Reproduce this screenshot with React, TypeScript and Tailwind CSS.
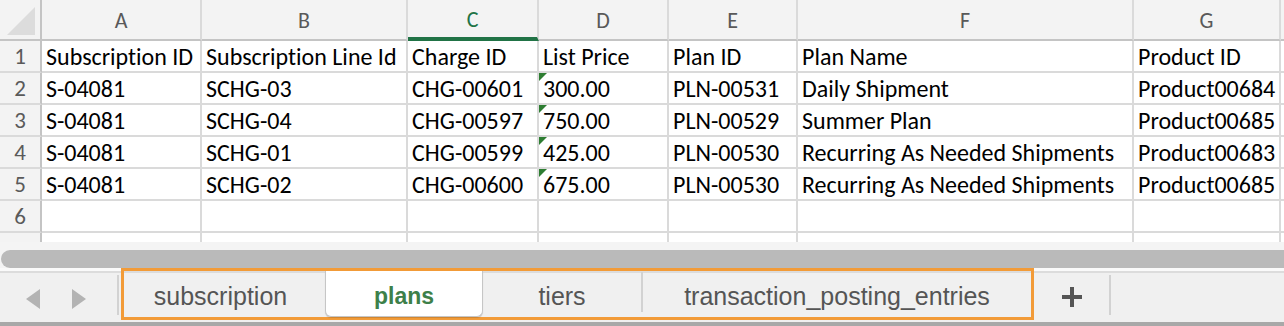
import React from "react"

const columns = [
  { letter: "A", width: "w-[160px]" },
  { letter: "B", width: "w-[206px]" },
  { letter: "C", width: "w-[131px]" },
  { letter: "D", width: "w-[130px]" },
  { letter: "E", width: "w-[129px]" },
  { letter: "F", width: "w-[336px]" },
  { letter: "G", width: "w-[147px]" },
]

const rows: string[][] = [
  ["Subscription ID", "Subscription Line Id", "Charge ID", "List Price", "Plan ID", "Plan Name", "Product ID"],
  ["S-04081", "SCHG-03", "CHG-00601", "300.00", "PLN-00531", "Daily Shipment", "Product00684"],
  ["S-04081", "SCHG-04", "CHG-00597", "750.00", "PLN-00529", "Summer Plan", "Product00685"],
  ["S-04081", "SCHG-01", "CHG-00599", "425.00", "PLN-00530", "Recurring As Needed Shipments", "Product00683"],
  ["S-04081", "SCHG-02", "CHG-00600", "675.00", "PLN-00530", "Recurring As Needed Shipments", "Product00685"],
  ["", "", "", "", "", "", ""],
]

const cellFont = "[font-family:Carlito,Calibri,Lato,sans-serif] [font-variant-ligatures:none]"
const tabFont = "[font-family:'Liberation_Sans',Arial,sans-serif]"

function HeaderRow() {
  return (
    <div className="flex h-[41px] bg-[#f3f3f3]">
      <div className="w-[42px] shrink-0 border-r-2 border-b-2 border-[#c4c4c4] relative">
        <svg width="42" height="39" className="absolute left-0 top-0">
          <polygon points="7,35 35,35 35,7" fill="#dcdcdc" />
        </svg>
      </div>
      {columns.map((col) => (
        <div
          key={col.letter}
          className={`${col.width} shrink-0 flex items-center justify-center pt-[1px] border-r-2 border-[#dadada] text-[22px] ${cellFont} ${
            col.letter === "C"
              ? "border-b-4 border-b-[#217346] text-[#217346]"
              : "border-b-2 border-b-[#c4c4c4] text-[#595959]"
          }`}
        >
          {col.letter}
        </div>
      ))}
      <div className="flex-1 border-b-2 border-[#c4c4c4]" />
    </div>
  )
}

function DataRow({ index, cells }: { index: number; cells: string[] }) {
  return (
    <div className={`flex h-[32px] ${cellFont}`}>
      <div className="w-[42px] shrink-0 flex items-center justify-center pt-[1px] bg-[#f3f3f3] border-r-2 border-b-2 border-r-[#c4c4c4] border-b-[#dadada] text-[23px] text-[#5a5a5a]">
        {index}
      </div>
      {cells.map((text, i) => (
        <div
          key={i}
          className={`${columns[i].width} shrink-0 relative flex items-center pl-[4px] pt-[1px] bg-white border-r-2 border-b-2 border-[#dadada] text-[24px] text-black whitespace-nowrap overflow-hidden`}
        >
          {i === 3 && index > 1 && index < 6 && (
            <svg width="8" height="8" className="absolute left-0 top-0">
              <polygon points="0,0 8,0 0,8" fill="#2e7d32" />
            </svg>
          )}
          {text}
        </div>
      ))}
      <div className="flex-1 bg-white border-b-2 border-[#dadada]" />
    </div>
  )
}

function PartialRow() {
  return (
    <div className="flex h-[9px]">
      <div className="w-[42px] shrink-0 bg-[#f3f3f3] border-r-2 border-[#c4c4c4]" />
      {columns.map((col) => (
        <div key={col.letter} className={`${col.width} shrink-0 bg-white border-r-2 border-[#dadada]`} />
      ))}
      <div className="flex-1 bg-white" />
    </div>
  )
}

function SheetTabs() {
  return (
    <div className="flex h-[58px] items-start bg-[linear-gradient(to_bottom,#fafafa_0,#fafafa_3px,#dcdcdc_3px,#dcdcdc_5px,#f0f0f0_5px)] border-b-4 border-[#a8a8a8]">
      <div className="w-[117px] shrink-0 h-full flex items-center gap-[32px] pl-[26px] pt-[7px]">
        <svg width="14" height="20">
          <polygon points="14,0 14,20 0,10" fill="#b3b3b3" />
        </svg>
        <svg width="14" height="20">
          <polygon points="0,0 0,20 14,10" fill="#b3b3b3" />
        </svg>
      </div>
      <div className="w-[2px] h-[40px] mt-[7px] bg-[#d2d2d2]" />
      <div className={`ml-[2px] w-[913px] h-[52px] border-[3px] border-[#f29b38] flex ${tabFont}`}>
        <div className="w-[201px] flex items-center justify-center pr-[8px] pt-[6px] text-[25px] text-[#555]">subscription</div>
        <div className="w-[158px] h-full flex items-center justify-center pt-[5px] bg-white border-x border-b border-[#c6c6c6] rounded-b-[6px] shadow-[0_1px_1px_rgba(0,0,0,0.15)] text-[23px] font-bold text-[#3d8049]">
          plans
        </div>
        <div className="w-[158px] flex items-center justify-center pt-[6px] text-[25px] text-[#555]">tiers</div>
        <div className="w-[2px] h-[40px] mt-[1px] bg-[#d2d2d2]" />
        <div className="flex-1 flex items-center justify-center pt-[6px] text-[25px] text-[#555]">transaction_posting_entries</div>
      </div>
      <div className="w-[75px] h-full flex items-center justify-center pt-[3px]">
        <svg width="20" height="20">
          <rect x="8" y="0" width="4" height="20" fill="#555" />
          <rect x="0" y="8" width="20" height="4" fill="#555" />
        </svg>
      </div>
      <div className="w-[2px] h-[40px] mt-[7px] bg-[#d2d2d2]" />
    </div>
  )
}

export default function App() {
  return (
    <div className="w-[1284px] h-[326px] overflow-hidden bg-white">
      <HeaderRow />
      {rows.map((cells, i) => (
        <DataRow key={i} index={i + 1} cells={cells} />
      ))}
      <PartialRow />
      <div className="h-[8px] bg-[#f4f4f4]" />
      <div className="h-[18px] bg-[#f4f4f4]">
        <div className="h-full ml-[1px] rounded-l-full bg-[#bababa]" />
      </div>
      <SheetTabs />
    </div>
  )
}
